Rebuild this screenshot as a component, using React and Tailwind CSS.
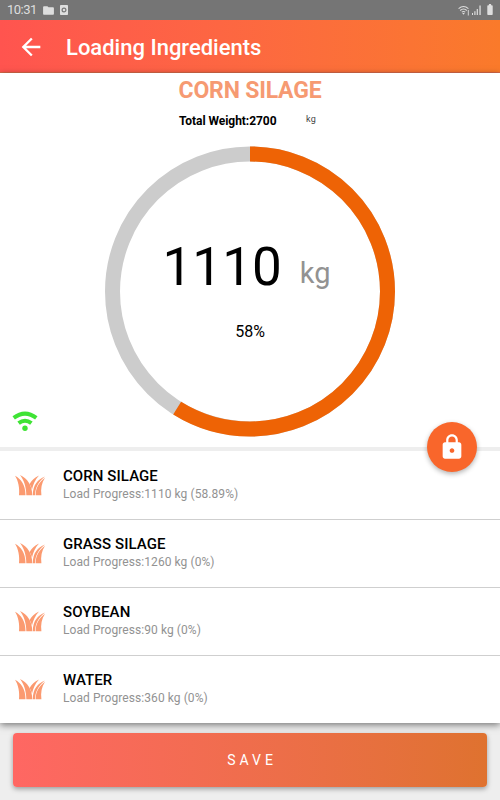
import { MdArrowBack, MdFolder, MdLock, MdBatteryFull } from 'react-icons/md';

const ingredients = [
    { name: 'CORN SILAGE', progress: '1110 kg (58.89%)' },
    { name: 'GRASS SILAGE', progress: '1260 kg (0%)' },
    { name: 'SOYBEAN', progress: '90 kg (0%)' },
    { name: 'WATER', progress: '360 kg (0%)' },
];

const StatusBar = () => (
    <div className="h-5 bg-[#757575] flex items-center justify-between pl-[7px] pr-[5px] text-[#dedede]">
        <div className="flex items-center">
            <span className="w-[35px] text-[13px] leading-5 tracking-[-0.5px]">10:31</span>
            <MdFolder className="w-[13px] h-[13px]" />
            <svg viewBox="0 0 8 10" className="w-2 h-[10px] ml-[5px]">
                <rect width="8" height="10" rx="0.8" fill="currentColor" />
                <circle cx="4" cy="5" r="1.9" fill="none" stroke="#777" strokeWidth="1.2" />
            </svg>
        </div>
        <div className="flex items-center">
            <svg viewBox="0 0 12 11" className="w-3 h-[11px]" fill="none" stroke="currentColor">
                <path d="M0.6 3.6Q5.5 -0.7 10.4 3.6M2.2 5.5Q5.5 2.6 8.8 5.5M3.8 7.2Q5.5 5.8 7.2 7.2" strokeWidth="1.1" />
                <path d="M4.2 8h2.6L5.5 9.7z" fill="currentColor" stroke="none" />
                <path d="M10.3 5v5.5" strokeWidth="0.9" />
            </svg>
            <svg viewBox="0 0 10 10" className="w-[10px] h-[10px] ml-[2px]" fill="currentColor">
                <path d="M0 8h1v2H0zM2.3 6.3h1.2V10H2.3zM4.7 4h1.2v6H4.7zM7.4 0.5h1.3V10H7.4z" />
            </svg>
            <MdBatteryFull className="w-[14px] h-[13px] ml-px -mr-[2px] mb-[2px]" />
        </div>
    </div>
);

const ProgressRing = ({ percent }) => (
    <svg viewBox="0 0 290 290" className="col-start-1 row-start-1 w-[290px] h-[290px] overflow-visible" fill="none" strokeWidth="15">
        <circle cx="145" cy="144.5" r="137.5" stroke="#cccccc" />
        <circle
            cx="145"
            cy="144.5"
            r="137.5"
            stroke="#ee6305"
            pathLength="100"
            strokeDasharray={`${percent} 100`}
            transform="rotate(-90 145 144.5)"
        />
    </svg>
);

const GrassIcon = () => (
    <svg viewBox="0 0 30 21" className="w-[30px] h-[21px]" fill="#fb9a70">
        <path d="M0 0.8C6 4.2 10.4 9.4 10.5 20.2H4C4.8 13.5 3.3 5.6 0 0.8z" />
        <path d="M5 0C12.6 3.8 17 10 17.3 20.2H11.3C11.3 12.4 9 5 5 0z" />
        <path d="M24 0.6C19.4 3 16.6 5.6 14.6 9C15.8 11.2 16.5 12.8 17 14.6C18.2 9.6 20 4.6 24 0.6z" />
        <path d="M30 1.4C22.6 4.2 17.8 10 17.8 20.2H20C20.2 12.9 23.4 6.4 30 1.4z" />
        <path d="M30 2.8C24 7.2 20.8 12.5 20.6 20.2H26.4C25.6 13.8 26.6 8.2 30 2.8z" />
    </svg>
);

const WifiIcon = () => (
    <svg viewBox="0 0 26 20" className="w-[26px] h-5" fill="none" stroke="#3fe335" strokeWidth="4">
        <path d="M1.7 6.9Q13 -1.6 24.3 6.9" />
        <path d="M6.6 12.2Q13 7.2 19.4 12.2" />
        <circle cx="13" cy="17.2" r="2.7" fill="#3fe335" stroke="none" />
    </svg>
);

const IngredientRow = ({ name, progress }) => (
    <li className="h-[68px] flex items-center pl-[15px] border-t border-[#cfcfcf] first:border-t-0">
        <GrassIcon />
        <div className="ml-[18px] pb-px">
            <h3 className="text-[15px] leading-[19px] tracking-[0.08px] font-medium text-black">{name}</h3>
            <p className="text-xs leading-[17px] tracking-[0.07px] text-[#929292]">Load Progress:{progress}</p>
        </div>
    </li>
);

const App = () => {
    return (
        <div className="w-[500px] h-[800px] flex flex-col overflow-hidden bg-[#eeeeee] font-['Roboto',sans-serif]">
            <StatusBar />
            <header className="h-[53px] shrink-0 flex items-center pt-px pl-[17px] text-white bg-linear-to-r from-[#ff544f] to-[#fa7a2a] border-b border-[#d96a48]">
                <MdArrowBack className="w-[28px] h-[28px]" />
                <h1 className="ml-[21px] pt-0.5 text-[22px] font-medium">Loading Ingredients</h1>
            </header>

            <main className="relative h-[650px] shrink-0 bg-white shadow-[0_2px_7px_rgba(0,0,0,0.5)]">
                <section className="h-[374px] flex flex-col items-center">
                    <h2 className="h-[34px] text-[23px] leading-[35px] tracking-[-0.2px] font-bold text-[#f69a72]">CORN SILAGE</h2>
                    <div className="w-[142px] h-[26px] flex items-center text-xs text-black">
                        <span className="w-[127px] pt-px tracking-[-0.05px] font-bold">Total Weight:2700</span>
                        <span className="text-[9px] tracking-[0.4px] text-[#444] -mt-0.5">kg</span>
                    </div>
                    <div className="mt-[14px] grid">
                        <ProgressRing percent={58.89} />
                        <div className="col-start-1 row-start-1 flex flex-col items-center pt-[88px]">
                            <div className="flex items-baseline leading-[64px] mr-[7px]">
                                <span className="text-[53px] text-black">1110</span>
                                <span className="ml-[18px] -translate-y-0.5 text-[29px] text-[#929292]">kg</span>
                            </div>
                            <span className="mt-[15px] text-base leading-5 text-black">58%</span>
                        </div>
                    </div>
                </section>
                <div className="absolute left-3 top-[338px]">
                    <WifiIcon />
                </div>
                <button
                    aria-label="Lock"
                    className="absolute left-[427px] top-[349px] w-[50px] h-[50px] rounded-full bg-[#f9662b] text-white flex items-center justify-center shadow-[0_2px_5px_rgba(0,0,0,0.3)]"
                >
                    <MdLock className="w-7 h-7" />
                </button>
                <ul className="border-t-4 border-[#eeeeee]">
                    {ingredients.map((item) => (
                        <IngredientRow key={item.name} {...item} />
                    ))}
                </ul>
            </main>

            <button className="mx-[13px] mt-[10px] h-[54px] shrink-0 relative rounded-[4px] bg-linear-to-r from-[#ff6763] to-[#df722f] text-white text-sm tracking-[4px] pl-1 shadow-[0_2px_5px_rgba(0,0,0,0.35)]">
                SAVE
            </button>
        </div>
    );
};

export default App;
